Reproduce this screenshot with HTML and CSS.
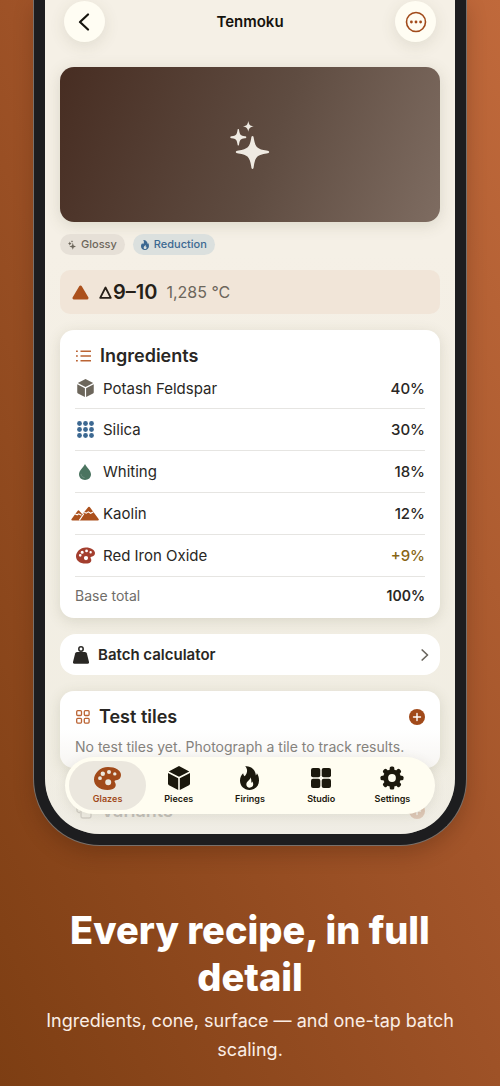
FILE: index.html
```html
<!DOCTYPE html>
<html lang="en">
<head>
<meta charset="utf-8">
<meta name="viewport" content="width=device-width, initial-scale=1">
<title>Tenmoku</title>
<link rel="stylesheet" href="styles.css">
</head>
<body>
<svg class="sprite" aria-hidden="true">
  <symbol id="sparkles" viewBox="1.500 0 40 48">
    <path d="M24 15c.9 0 1.100.8 1.300 2.300 1.500 9 3.500 10.800 12.700 12.200 1.800.3 2.700.6 2.700 1.500s-.9 1.200-2.700 1.500c-9.200 1.400-11.200 3.200-12.700 12.700C25.100 46.900 24.900 48 24 48s-1.100-1.100-1.300-2.800c-1.500-9.500-3.500-11.300-12.700-12.700-1.800-.3-2.700-.6-2.700-1.500s.9-1.200 2.700-1.500c9.200-1.400 11.200-3.200 12.700-12.200.2-1.500.4-2.300 1.300-2.300z"/>
    <path d="M9.800 8c.5 0 .7.500.8 1.200.7 4.500 1.400 5.300 5.800 6 .8.100 1.400.3 1.400 1s-.6.900-1.400 1c-4.400.7-5.100 1.500-5.800 6-.1.800-.3 1.300-.8 1.300s-.7-.5-.8-1.300c-.7-4.500-1.400-5.300-5.800-6-.8-.1-1.400-.3-1.400-1s.6-.9 1.400-1c4.400-.7 5.100-1.500 5.800-6 .1-.7.300-1.200.8-1.200z"/>
    <path d="M19.800 0c.7 3.800 1.600 4.800 5.400 5.400-3.800.6-4.700 1.600-5.400 5.400-.7-3.800-1.600-4.800-5.400-5.400 3.800-.6 4.700-1.600 5.400-5.400z"/>
  </symbol>
  <symbol id="flame" viewBox="0 0 24 30">
    <path fill-rule="evenodd" d="M6.500.3C13.500-.7 20 5 20 11.800c.8-.8 1.200-1.800 1.300-2.800C23.200 11.500 24 14.500 24 18c0 7-5 12-12 12S0 25 0 18.500c0-4 1.500-7 4-9.500.2 1.800.8 3 2 3.800C9 9.500 10.500 4.500 6.500.3zM13 14c.5 3.500-5 5-5 9.200 0 2.400 1.800 4 4.200 4s4.500-1.600 4.500-4.200c0-1.600-.6-2.700-1.300-3.500-.2.900-.6 1.400-1.300 1.700.5-2.700.3-5.100-1.100-7.200z"/>
  </symbol>
  <symbol id="cube" viewBox="0 0 22 24">
    <path d="M11 0l10.300 5.400L11 10.800.7 5.400zM0 7l10.200 5.300V24L1 19.200Q0 18.600 0 17.500zM22 7l-10.200 5.300V24l9.200-4.800q1-.6 1-1.700z"/>
  </symbol>
  <symbol id="palette" viewBox="0 0 27 23">
    <path fill-rule="evenodd" d="M14 0c7.500 0 13 3.500 13 8 0 3-2 5-5 5.300-1.600.2-1.700 1.200-1 2.300 2 3.200.2 7.400-7.500 7.400C5.500 23 0 18.500 0 12.500S6 0 14 0zM6 9.300a1.900 1.900 0 1 0 0 3.800 1.900 1.900 0 0 0 0-3.800zM8.800 4.600a2.200 2.200 0 1 0 0 4.400 2.200 2.200 0 0 0 0-4.400zM15 3a2 2 0 1 0 0 4 2 2 0 0 0 0-4zM20.800 5.200a1.700 1.700 0 1 0 0 3.400 1.700 1.700 0 0 0 0-3.400zM14.200 12.200a3 3 0 1 0 0 6 3 3 0 0 0 0-6z"/>
  </symbol>
  <symbol id="grid4" viewBox="0 0 20 20">
    <rect width="9.300" height="9.300" rx="2"/><rect x="10.700" width="9.300" height="9.300" rx="2"/><rect y="10.700" width="9.300" height="9.300" rx="2"/><rect x="10.700" y="10.700" width="9.300" height="9.300" rx="2"/>
  </symbol>
  <symbol id="gear" viewBox="-12 -12 24 24">
    <g id="teeth"><rect x="-2.300" y="-11.500" width="4.600" height="23" rx="1.600"/><rect x="-11.500" y="-2.300" width="23" height="4.600" rx="1.600"/></g>
    <use href="#teeth" transform="rotate(45)"/>
    <circle r="8.800"/>
    <circle r="3.900" fill="#fffdf1"/>
  </symbol>
  <symbol id="plus" viewBox="0 0 16 16">
    <circle cx="8" cy="8" r="8"/><path d="M8 4.500v7M4.500 8h7" stroke="#fff" stroke-width="1.400" stroke-linecap="round"/>
  </symbol>
</svg>

<div class="phone">
  <main class="screen">
    <header class="topbar">
      <button class="round" aria-label="Back"><svg width="14" height="18" viewBox="0 0 14 18"><path d="M10 1.500L2 9l8 7.500" fill="none" stroke="#15130d" stroke-width="2.200" stroke-linecap="round" stroke-linejoin="round"/></svg></button>
      <h1 class="title">Tenmoku</h1>
      <button class="round" aria-label="More"><svg width="22" height="22" viewBox="0 0 22 22"><circle cx="11" cy="11" r="9.500" fill="none" stroke="#a14a1a" stroke-width="1.600"/><g fill="#a14a1a"><circle cx="6.400" cy="11" r="1.400"/><circle cx="11" cy="11" r="1.400"/><circle cx="15.600" cy="11" r="1.400"/></g></svg></button>
    </header>

    <div class="hero"><svg width="40" height="48"><use href="#sparkles"/></svg></div>

    <div class="chips">
      <span class="chip"><svg width="8" height="10" viewBox="0 0 40 48"><path d="M24 12l4 14 12 5-12 5-4 12-4-12-13-5 13-5zM9 6l3 8 6 3-6 3-3 7-3-7-6-3 6-3zM20 0l2 4 4 2-4 2-2 4-2-4-4-2 4-2z"/></svg>Glossy</span>
      <span class="chip chip-blue"><svg width="8" height="10"><use href="#flame"/></svg>Reduction</span>
    </div>

    <div class="cone">
      <svg width="17" height="15" viewBox="0 0 17 15"><path d="M8.500 2L2 13h13z" fill="#ab501c" stroke="#ab501c" stroke-width="3" stroke-linejoin="round"/></svg>
      <span class="cone-name"><svg width="13" height="13" viewBox="0 0 13 13"><path d="M6.500 1.500L1.200 11.800h10.600z" fill="none" stroke="#261f18" stroke-width="1.800" stroke-linejoin="round"/></svg>9–10</span>
      <span class="cone-temp">1,285 °C</span>
    </div>

    <section class="card">
      <h2 class="heading">
        <svg class="head-icon" width="15" height="12" viewBox="0 0 15 12"><path d="M4.500 1.200H15M4.500 6H15M4.500 10.800H15M0 1.200h1.800M0 6h1.800M0 10.800h1.800" stroke="#bb6434" stroke-width="1.500"/></svg>
        Ingredients
      </h2>
      <ul class="rows">
        <li class="row"><span class="row-icon"><svg width="17" height="18" fill="#6c665b"><use href="#cube"/></svg></span>Potash Feldspar<b class="pct">40%</b></li>
        <li class="row"><span class="row-icon"><svg width="17" height="17" viewBox="0 0 17 17" fill="#3c6891"><circle cx="2.500" cy="2.500" r="2.400"/><circle cx="8.500" cy="2.500" r="2.400"/><circle cx="14.500" cy="2.500" r="2.400"/><circle cx="2.500" cy="8.500" r="2.400"/><circle cx="8.500" cy="8.500" r="2.400"/><circle cx="14.500" cy="8.500" r="2.400"/><circle cx="2.500" cy="14.500" r="2.400"/><circle cx="8.500" cy="14.500" r="2.400"/><circle cx="14.500" cy="14.500" r="2.400"/></svg></span>Silica<b class="pct">30%</b></li>
        <li class="row"><span class="row-icon"><svg width="12" height="16" viewBox="0 0 12 16"><path d="M6 0c1.500 3.200 6 6.500 6 10.300C12 13.800 9.400 16 6 16s-6-2.200-6-5.700C0 6.500 4.500 3.200 6 0z" fill="#4b7460"/><path d="M2 10.300c.3 1.900 1.400 3 3.200 3.300" fill="none" stroke="#78988a" stroke-width=".8" stroke-linecap="round"/></svg></span>Whiting<b class="pct">18%</b></li>
        <li class="row"><span class="row-icon"><svg width="28" height="15" viewBox="0 0 28 15"><path d="M18 .8Q18.700.8 19.300 1.800L27.600 13q.8 1.400-.8 1.400H1.500Q-.3 14.400.6 13L6.500 5q1-1.400 2 0l2.800 3.300L16.700 1.800Q17.300.8 18 .8z" fill="#ab501c"/><path d="M4.200 7.900l2 .9 1.500-1 2.700 1.400M13.300 6.200l2 1 2-1.300 2.300 1.400 2.600-1.300M13 7.500l-4.700 6.900" fill="none" stroke="#fff" stroke-width="1.100"/></svg></span>Kaolin<b class="pct">12%</b></li>
        <li class="row"><span class="row-icon"><svg width="19" height="17" fill="#a33e2e"><use href="#palette"/></svg></span>Red Iron Oxide<b class="pct pct-add">+9%</b></li>
      </ul>
      <div class="total">Base total<b class="total-value">100%</b></div>
    </section>

    <button class="batch">
      <svg width="16" height="18" viewBox="0 0 16 18"><circle cx="8" cy="3" r="2.200" fill="none" stroke="#292724" stroke-width="1.500"/><path d="M4 6h8q1.500 0 1.900 1.500L16 16q.2 1.700-1.500 1.700h-13Q-.2 17.700 0 16L2.100 7.500Q2.500 6 4 6z" fill="#292724"/></svg>
      Batch calculator
      <svg class="end" width="8" height="12" viewBox="0 0 8 12"><path d="M1.200 1L6.500 6l-5.300 5" fill="none" stroke="#6a665e" stroke-width="1.700" stroke-linecap="round" stroke-linejoin="round"/></svg>
    </button>

    <section class="card tiles">
      <h2 class="heading">
        <svg class="head-icon" width="14" height="14" viewBox="0 0 14 14" fill="none" stroke="#bb6434" stroke-width="1.300"><rect x=".7" y=".7" width="4.800" height="4.800" rx="1"/><rect x="8.300" y=".7" width="4.800" height="4.800" rx="1"/><rect x=".7" y="8.300" width="4.800" height="4.800" rx="1"/><rect x="8.300" y="8.300" width="4.800" height="4.800" rx="1"/></svg>
        Test tiles
        <button class="add" aria-label="Add test tile"><svg width="16" height="16"><use href="#plus"/></svg></button>
      </h2>
      <p class="note">No test tiles yet. Photograph a tile to track results.</p>
    </section>

    <section class="card variants">
      <h2 class="heading">
        <svg class="head-icon" width="16" height="16" viewBox="0 0 16 16" fill="none" stroke="#6c665b" stroke-width="1.300"><path d="M4 9.500H3A2 2 0 0 1 1 7.500V3a2 2 0 0 1 2-2h5a2 2 0 0 1 2 2v1"/><rect x="5" y="5" width="10" height="10" rx="2"/></svg>
        Variants
        <button class="add" aria-label="Add variant"><svg width="16" height="16"><use href="#plus"/></svg></button>
      </h2>
    </section>

    <nav class="tabs">
      <a class="tab tab-on" href="#glazes"><svg width="27" height="23"><use href="#palette"/></svg>Glazes</a>
      <a class="tab" href="#pieces"><svg width="22" height="24"><use href="#cube"/></svg>Pieces</a>
      <a class="tab" href="#firings"><svg width="19" height="24"><use href="#flame"/></svg>Firings</a>
      <a class="tab" href="#studio"><svg width="20" height="20"><use href="#grid4"/></svg>Studio</a>
      <a class="tab" href="#settings"><svg width="24" height="24"><use href="#gear"/></svg>Settings</a>
    </nav>
  </main>
</div>

<div class="caption">
  <h2 class="caption-title">Every recipe, in full detail</h2>
  <p class="caption-text">Ingredients, cone, surface — and one-tap batch scaling.</p>
</div>
</body>
</html>
```
FILE: styles.css
```css
* { box-sizing: border-box; }

body {
  margin: 0;
  min-height: 100vh;
  padding: 0 34px;
  font-family: Inter, "Liberation Sans", sans-serif;
  color: #292724;
  background: linear-gradient(to top right, #7d3e13, #a3552a 58%, #c0693b);
}

h1, h2, p, ul { margin: 0; padding: 0; }
button { font: inherit; color: inherit; border: 0; padding: 0; cursor: pointer; }
a { color: inherit; text-decoration: none; }
svg { display: block; flex: none; }
.sprite { position: absolute; width: 0; height: 0; }

.phone {
  border: 11px solid #1d1d1f;
  border-top: 0;
  border-radius: 0 0 66px 66px;
  box-shadow: 0 0 0 1px #79706a, 0 8px 20px rgba(50, 20, 0, .25);
  background: #1d1d1f;
}

.screen {
  position: relative;
  overflow: hidden;
  padding: 1px 15px 0;
  border-radius: 0 0 55px 55px;
  background: linear-gradient(#f5f0e6 30%, #f0ede2);
}

.topbar {
  display: flex;
  align-items: center;
  justify-content: space-between;
  padding: 0 4px;
  margin-bottom: 25px;
}
.title { font-size: 15px; line-height: 20px; font-weight: 600; color: #15130d; }
.round {
  display: grid;
  place-items: center;
  width: 41px;
  height: 41px;
  border-radius: 50%;
  background: #fffdf3;
  box-shadow: 0 4px 16px rgba(80, 80, 50, .12);
}

.hero {
  display: grid;
  place-items: center;
  height: 155px;
  border-radius: 14px;
  fill: #efeae2;
  background: linear-gradient(110deg, #472d22, #5f4c41 55%, #7e6c61);
  box-shadow: 0 3px 16px rgba(80, 80, 50, .16);
}

.chips { display: flex; gap: 8px; margin: 12px 0 15px; }
.chip {
  display: flex;
  align-items: center;
  gap: 5px;
  padding: 0 8px;
  border-radius: 11px;
  font-size: 11px;
  line-height: 21px;
  font-weight: 500;
  color: #6c665b;
  fill: #6c665b;
  background: #e6e0d7;
}
.chip-blue { color: #3c6891; fill: #3c6891; background: #dbe0de; }

.cone {
  display: flex;
  align-items: center;
  padding: 0 12px;
  height: 44px;
  border-radius: 10px;
  background: #f1e5d8;
}
.cone-name {
  display: flex;
  align-items: center;
  gap: 1px;
  margin: 0 9px 0 10px;
  font-size: 20px;
  font-weight: 600;
  color: #261f18;
}
.cone-temp { font-size: 16px; color: #6c665b; }

.card {
  margin-top: 16px;
  padding: 14px 15px 4px;
  border-radius: 14px;
  background: #fff;
  box-shadow: 0 3px 14px rgba(80, 80, 50, .15);
}
.heading {
  display: flex;
  align-items: center;
  gap: 9px;
  font-size: 18px;
  line-height: 24px;
  font-weight: 600;
}
.head-icon { margin-left: 1px; }

.rows { list-style: none; }
.row {
  display: flex;
  align-items: center;
  gap: 8px;
  height: 42px;
  border-bottom: 1px solid #e6e5e2;
  font-size: 15px;
}
.row:first-child { height: 41px; }
.row-icon { display: flex; justify-content: center; width: 20px; }
.pct { margin-left: auto; font-weight: 500; }
.pct-add { color: #876514; }
.total {
  display: flex;
  align-items: center;
  height: 37px;
  font-size: 14px;
  color: #6f6d69;
}
.total-value { margin-left: auto; font-weight: 600; color: #292724; }

.batch {
  display: flex;
  align-items: center;
  gap: 9px;
  width: 100%;
  height: 41px;
  margin-top: 16px;
  padding: 0 11px 0 13px;
  border-radius: 16px;
  background: #fff;
  font-size: 15px;
  font-weight: 600;
}
.end { margin-left: auto; }

.tiles { margin-top: 16px; padding-bottom: 11px; background: linear-gradient(#fff 50%, #f7f5f2); }
.note { font-size: 14px; line-height: 20px; margin-top: 8px; color: #85827d; }
.add { margin-left: auto; background: none; fill: #a14a1a; }

.variants {
  margin: 19px 0 0;
  padding: 12px 15px 11px;
  border-radius: 0;
  background: none;
  box-shadow: none;
  opacity: .4;
}

.screen::after {
  content: "";
  position: absolute;
  inset: auto 0 0;
  height: 70px;
  background: linear-gradient(rgba(239, 236, 230, 0), rgba(239, 236, 230, .6));
}

.tabs {
  position: absolute;
  z-index: 1;
  left: 20px;
  right: 20px;
  bottom: 20px;
  display: grid;
  grid-template-columns: repeat(5, 1fr);
  padding: 4px 7px;
  border-radius: 29px;
  background: #fffdf1;
  box-shadow: 0 2px 12px rgba(80, 80, 50, .1);
}
.tab {
  display: grid;
  grid-template-rows: 24px 14px;
  gap: 1px;
  place-items: center;
  padding: 5px 0;
  border-radius: 25px;
  font-size: 9px;
  font-weight: 600;
  color: #1b180d;
  fill: #1b180d;
}
.tab-on { margin: 0 -3px; color: #a14a1a; fill: #a14a1a; background: #ebe7de; }

.caption { padding: 62px 0 22px; text-align: center; color: #fff; }
.caption-title { font-size: 38px; line-height: 47px; font-weight: 800; }
.caption-text { margin: 5px 0 0; font-size: 18px; line-height: 29px; color: #fbeee5; }
```
